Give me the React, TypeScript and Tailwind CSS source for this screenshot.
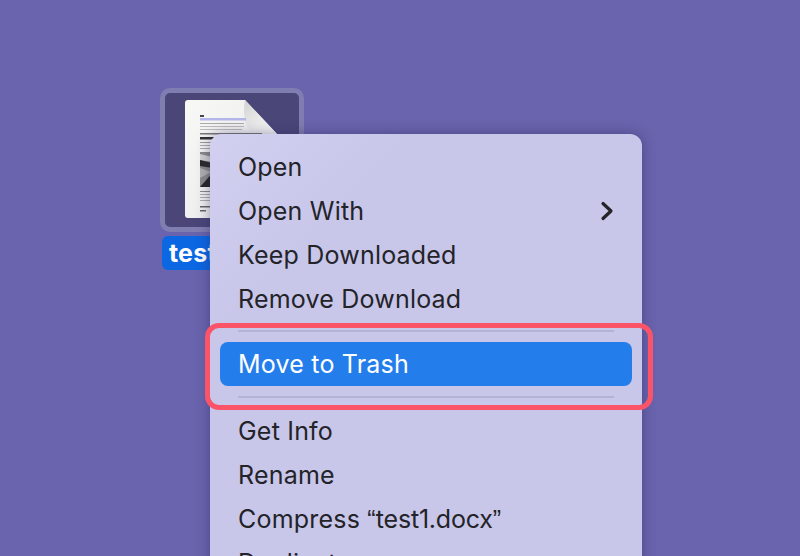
import type { ReactNode } from "react";

const MenuItem = ({ children, active, arrow }: { children: ReactNode; active?: boolean; arrow?: boolean }) => (
  <div
    className={`mx-[10px] flex h-[44px] items-center justify-between rounded-[8px] px-[18px] ${
      active ? "bg-[#237eeb] pt-[1px] text-white" : "text-[#232328]"
    }`}
  >
    <span>{children}</span>
    {arrow && (
      <svg width="14" height="20" viewBox="0 0 14 20" fill="none">
        <path d="M3 2.5 L11 10 L3 17.5" stroke="#232328" strokeWidth="3.2" strokeLinecap="round" strokeLinejoin="round" />
      </svg>
    )}
  </div>
);

const DocThumb = () => (
  <svg width="100" height="120" viewBox="0 0 100 120" className="block">
    <defs>
      <linearGradient id="pg" x1="0" y1="0" x2="1" y2="1">
        <stop offset="0" stopColor="#f8f8f7" />
        <stop offset="1" stopColor="#e8e8e8" />
      </linearGradient>
      <linearGradient id="fold" x1="0" y1="0" x2="1" y2="1">
        <stop offset="0" stopColor="#d2d2d2" />
        <stop offset="0.6" stopColor="#eeeeee" />
        <stop offset="1" stopColor="#f8f8f8" />
      </linearGradient>
      <filter id="soft">
        <feGaussianBlur stdDeviation="0.35" />
      </filter>
    </defs>
    <path d="M3 0 H60 L93 35 V115 a3 3 0 0 1 -3 3 H3 a3 3 0 0 1 -3 -3 V3 a3 3 0 0 1 3 -3 Z" fill="url(#pg)" />
    <path d="M60 0 C58 10 59 24 64 29 C68 33 78 34 92 34 Z" fill="url(#fold)" />
    <g filter="url(#soft)">
      <rect x="15" y="15" width="4" height="2" fill="#444" />
      <rect x="15" y="18" width="46" height="2.5" fill="#b4b5ea" />
      <rect x="15" y="23" width="44" height="1" fill="#aaa" />
      <rect x="15" y="26" width="44" height="1" fill="#bbb" />
      <rect x="15" y="29" width="42" height="1" fill="#bbb" />
      <rect x="15" y="33" width="62" height="1.5" fill="#777" />
      <rect x="15" y="37" width="30" height="2.5" fill="#333" />
      <rect x="15" y="42" width="26" height="1" fill="#999" />
      <rect x="15" y="45" width="26" height="1" fill="#aaa" />
      <rect x="15" y="48" width="26" height="1" fill="#aaa" />
      <rect x="15" y="52" width="30" height="35" fill="#8a8a8a" />
      <path d="M15 54 L40 60 V64 L15 60 Z" fill="#d0d0d0" />
      <path d="M15 60 L40 66 V70 L15 66 Z" fill="#2a2a2a" />
      <path d="M15 68 L26 72 L15 78 Z" fill="#b0b0b0" />
      <path d="M15 87 L30 70 V87 Z" fill="#262626" />
      <rect x="15" y="91" width="26" height="1" fill="#888" />
      <rect x="15" y="94" width="22" height="1" fill="#aaa" />
      <rect x="15" y="97" width="26" height="1" fill="#aaa" />
      <rect x="15" y="100" width="26" height="1" fill="#aaa" />
      <rect x="15" y="106" width="20" height="1.5" fill="#666" />
      <rect x="15" y="110" width="6" height="1.5" fill="#666" />
    </g>
  </svg>
);

const App = () => {
  return (
    <div
      className="relative h-[556px] w-[800px] overflow-hidden bg-[#6964ad] text-[25px] leading-none tracking-[0.2px]"
      style={{ fontFamily: "Inter, 'Noto Sans', sans-serif" }}
    >
      {/* file icon on the desktop */}
      <div className="absolute left-[160px] top-[88px] flex w-[144px] flex-col items-center gap-[4px]">
        <div className="h-[144px] w-[144px] rounded-[10px] border-[5px] border-[#807db0] bg-[#4a4678] pl-[20px] pt-[7px]">
          <DocThumb />
        </div>
        <div className="flex h-[34px] w-[140px] items-center rounded-[6px] bg-[#0b67e2] pl-[7px] font-bold text-white">
          test1.docx
        </div>
      </div>

      {/* context menu */}
      <div className="absolute left-[210px] top-[134px] h-[480px] w-[432px] rounded-[12px] bg-[linear-gradient(135deg,#d1d0f0_0%,#c8c7ea_22%)] pt-[11px] shadow-[0_0_14px_rgba(40,36,90,0.45)]">
        <MenuItem>Open</MenuItem>
        <MenuItem arrow>Open With</MenuItem>
        <MenuItem>Keep Downloaded</MenuItem>
        <MenuItem>Remove Download</MenuItem>
        <div className="mx-7 mb-[10px] mt-[9px] h-[2px] bg-[#b4b2d6]" />
        <MenuItem active>Move to Trash</MenuItem>
        <div className="mx-7 mb-[11px] mt-[10px] h-[2px] bg-[#b4b2d6]" />
        <MenuItem>Get Info</MenuItem>
        <MenuItem>Rename</MenuItem>
        <MenuItem>
          Compress <span className="font-['Liberation_Sans']">“</span>
          <span className="tracking-[-0.2px]">test1.docx</span>
          <span className="font-['Liberation_Sans']">”</span>
        </MenuItem>
        <MenuItem>Duplicate</MenuItem>
      </div>

      {/* callout around the highlighted row */}
      <div className="absolute left-[205px] top-[323px] h-[87px] w-[448px] rounded-[14px] border-[5px] border-[#fb5468]" />
    </div>
  );
};

export default App;
